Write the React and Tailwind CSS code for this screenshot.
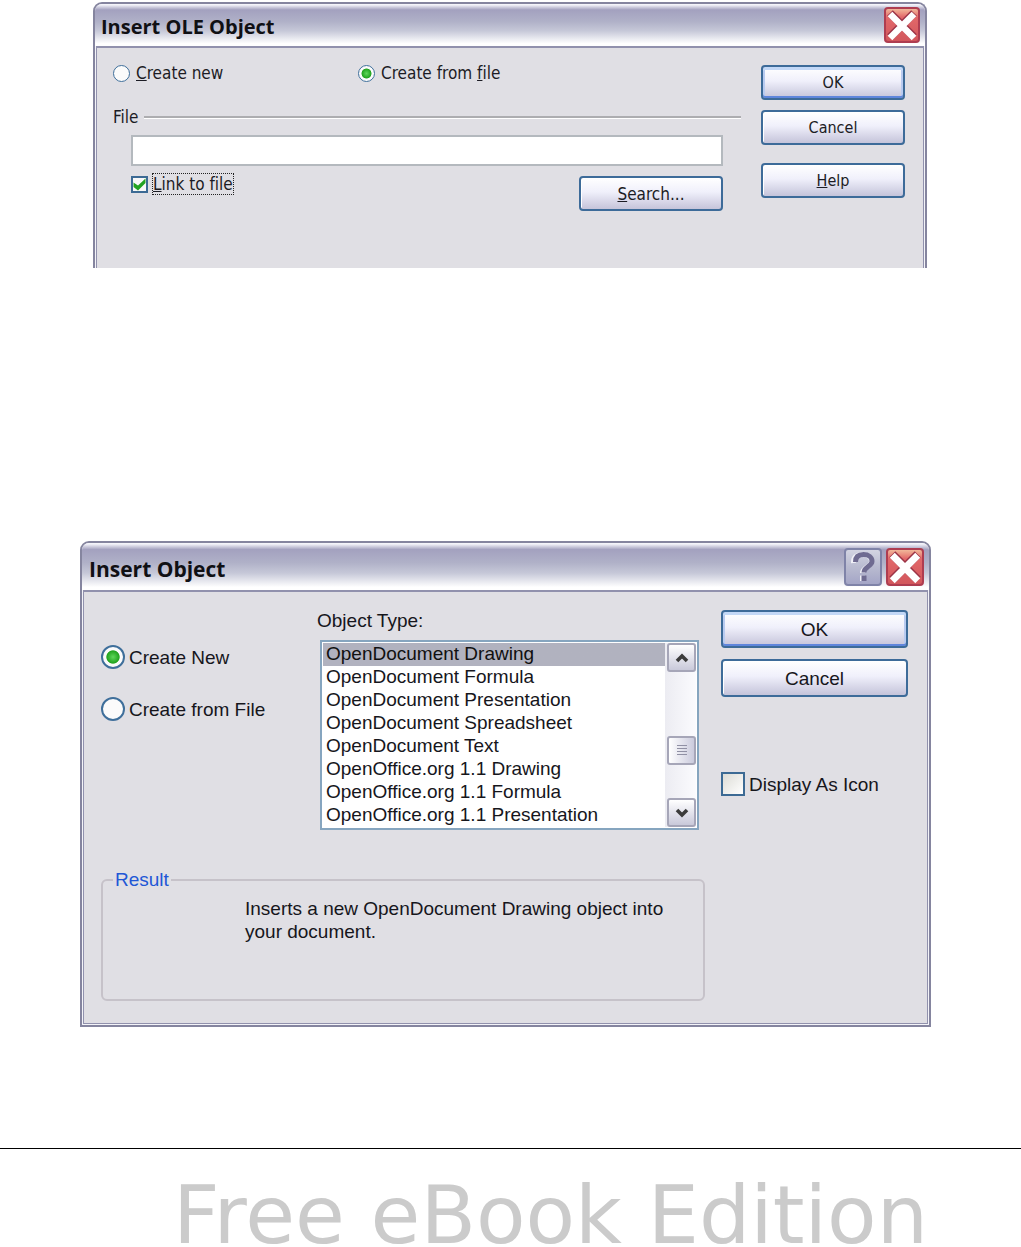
import { useState } from 'react';
import clsx from 'clsx';

const objectTypes = [
    'OpenDocument Drawing',
    'OpenDocument Formula',
    'OpenDocument Presentation',
    'OpenDocument Spreadsheet',
    'OpenDocument Text',
    'OpenOffice.org 1.1 Drawing',
    'OpenOffice.org 1.1 Formula',
    'OpenOffice.org 1.1 Presentation',
];

function CloseButton({ className }) {
    return (
        <button
            aria-label="Close"
            className={clsx('rounded-[4px] border-2 border-[#ae3d50] bg-linear-to-b from-[#f0b79a] via-[#e2686a] via-25% to-[#d2575c]', className)}
        >
            <svg viewBox="0 0 32 32" className="w-full h-full">
                <path d="M4 4L28 28M28 4L4 28" stroke="#9c3346" strokeWidth="8" />
                <path d="M4 5L28 29M28 5L4 29" stroke="#fff" strokeWidth="6.6" />
            </svg>
        </button>
    );
}

function HelpButton({ className }) {
    return (
        <button
            aria-label="Help"
            className={clsx('rounded-[4px] border-2 border-[#7f83a8] bg-linear-to-b from-[#d3d4e2] via-[#b9bbd0] to-[#a4a5c6]', className)}
        >
            <svg viewBox="0 0 34 34" className="w-full h-full" fill="none">
                <g stroke="#f1f1f8" strokeWidth="5">
                    <path d="M7.500 13C7 7 11 4.500 16.500 4.500C22 4.500 25.500 7.500 25.500 11.500C25.500 17 16.500 17 16.500 23" />
                    <path d="M16.500 25.500V31" />
                </g>
                <g stroke="#6f6b91" strokeWidth="5">
                    <path d="M9.500 12C9.500 7 12.500 4.500 17.500 4.500C22.500 4.500 26 7.200 26 11.200C26 16.500 18 16.500 18 22.500" />
                    <path d="M18 25.500V31" />
                </g>
            </svg>
        </button>
    );
}

function Window({ title, buttons, cut, className, titleClass, children }) {
    return (
        <section
            aria-label={title}
            className={clsx('border-t-2 border-x-2 border-[#85859f] rounded-t-[9px] bg-[#f4f4f9] overflow-hidden', !cut && 'border-b-2', className)}
        >
            <header
                className={clsx(
                    'flex items-center justify-between pr-[5px] font-bold leading-6 text-[#101014]',
                    "font-['Open_Sans',sans-serif] bg-[linear-gradient(#f4f4fa_2%,#a3a1bf_14%,#b0b1c8_42%,#c6c8d8_64%,#fff_94%)]",
                    titleClass
                )}
            >
                <h2 className="pt-1">{title}</h2>
                <div className="flex gap-1">{buttons}</div>
            </header>
            <div className={clsx('mx-px border-t-2 border-x border-[#9191ad] bg-[#e0dfe4]', !cut && 'border-b mb-px')}>{children}</div>
        </section>
    );
}

function PushButton({ primary, className, children }) {
    return (
        <button
            className={clsx(
                'w-full rounded-[4px] border-2 border-[#3d6b99] text-center bg-linear-to-b from-white via-[#f0f0fb] via-45% to-[#c5c4da]',
                primary ? 'shadow-[inset_0_3px_0_#c3d8f7,inset_0_-2px_0_#5f86dc,inset_2px_0_0_#b9cbf0,inset_-2px_0_0_#b9cbf0]' : 'shadow-[inset_1px_1px_0_#fff]',
                className
            )}
        >
            {children}
        </button>
    );
}

function Radio({ name, checked, onChange, big, children }) {
    return (
        <label className={clsx('flex items-center', big ? 'gap-1' : 'gap-1.5')}>
            <input
                type="radio"
                name={name}
                checked={checked}
                onChange={onChange}
                className={clsx(
                    'appearance-none shrink-0 rounded-full border-[#3f6f9b] bg-[#fbfbfb]',
                    big ? 'size-6 border-2' : 'size-[17px] border',
                    checked && 'bg-[radial-gradient(circle,#5fd75a_0%,#22a31f_44%,#fbfbfb_50%)]'
                )}
            />
            <span>{children}</span>
        </label>
    );
}

function ScrollButton({ label, path }) {
    return (
        <button
            aria-label={label}
            className="size-[29px] rounded-[3px] border-2 border-[#a6a6b8] bg-linear-to-b from-white to-[#c9c9da] flex items-center justify-center"
        >
            <svg viewBox="0 0 14 10" className="w-3.5 h-2.5" fill="none" stroke="#3c3c3c" strokeWidth="3.600">
                <path d={path} />
            </svg>
        </button>
    );
}

function InsertOleObject() {
    const [source, setSource] = useState('file');
    const [link, setLink] = useState(true);

    return (
        <Window title="Insert OLE Object" cut className="ml-[93px] mr-[94px]" titleClass="h-[42px] pl-1.5 text-[20px]" buttons={<CloseButton className="size-9" />}>
            <div className="flex gap-5 pl-4 pr-[18px] pt-[15px] pb-[57px] font-['DejaVu_Sans_Condensed','DejaVu_Sans',sans-serif] text-[17px] leading-5 text-[#1c1c24] [font-variant-ligatures:none]">
                <div className="flex-1">
                    <div className="grid grid-cols-[245px_1fr]">
                        <Radio name="source" checked={source === 'new'} onChange={() => setSource('new')}>
                            <u>C</u>reate new
                        </Radio>
                        <Radio name="source" checked={source === 'file'} onChange={() => setSource('file')}>
                            Create from <u>f</u>ile
                        </Radio>
                    </div>
                    <div className="flex items-center gap-1.5 mt-6">
                        <label htmlFor="file-path">File</label>
                        <div className="flex-1 h-[3px] border-t-2 border-b border-t-[#adadb0] border-b-white" />
                    </div>
                    <div className="px-[18px] pt-2">
                        <input id="file-path" type="text" className="block w-full h-[31px] px-1 border-2 border-[#b4b9be] bg-white outline-none" />
                        <div className="flex justify-between pt-2">
                            <label className="flex items-center gap-1 h-5">
                                <span className="relative flex">
                                    <input
                                        type="checkbox"
                                        checked={link}
                                        onChange={(e) => setLink(e.target.checked)}
                                        className="appearance-none size-[17px] border-2 border-[#3c6a94] bg-[#f8f8f8]"
                                    />
                                    {link && (
                                        <svg viewBox="0 0 17 17" className="absolute inset-0 pointer-events-none" fill="#22a322">
                                            <path d="M2.500 6.500L7 9.500L14.500 2.500V7L7 14.500L2.500 11Z" />
                                        </svg>
                                    )}
                                </span>
                                <span className="border border-dotted border-[#222]"><u>L</u>ink to file</span>
                            </label>
                            <div className="w-36 pt-0.5">
                                <PushButton className="h-[35px]"><u>S</u>earch...</PushButton>
                            </div>
                        </div>
                    </div>
                </div>
                <div className="w-36 pt-0.5 text-[16px]">
                    <PushButton primary className="h-[35px]">OK</PushButton>
                    <PushButton className="h-[35px] mt-2.5">Cancel</PushButton>
                    <PushButton className="h-[35px] mt-[18px]"><u>H</u>elp</PushButton>
                </div>
            </div>
        </Window>
    );
}

function InsertObject() {
    const [mode, setMode] = useState('new');
    const [type, setType] = useState(objectTypes[0]);

    return (
        <Window
            title="Insert Object"
            className="ml-[80px] mr-[90px]"
            titleClass="h-[47px] pl-[7px] text-[21px]"
            buttons={<><HelpButton className="size-[38px]" /><CloseButton className="size-[38px]" /></>}
        >
            <div className="flex gap-4 pl-[17px] pr-[19px] pt-[17px] pb-[22px] font-['Liberation_Sans',Arial,sans-serif] text-[19px] leading-[23px] text-[#16161c]">
                <div className="flex-1">
                    <div className="flex">
                        <div className="w-[216px] pt-9 flex flex-col gap-7">
                            <Radio big name="mode" checked={mode === 'new'} onChange={() => setMode('new')}>Create New</Radio>
                            <Radio big name="mode" checked={mode === 'file'} onChange={() => setMode('file')}>Create from File</Radio>
                        </div>
                        <div className="flex-1 pr-1.5">
                            <label htmlFor="object-type">Object Type:</label>
                            <div className="flex mt-2 ml-[3px] p-px border-2 border-[#86a5bf] bg-white">
                                <select
                                    id="object-type"
                                    size={8}
                                    value={type}
                                    onChange={(e) => setType(e.target.value)}
                                    className="flex-1 min-w-0 h-[184px] overflow-hidden outline-none bg-white"
                                >
                                    {objectTypes.map((t) => (
                                        <option key={t} value={t} className="h-[23px] min-h-0 p-0 pl-[3px] leading-[23px] checked:bg-linear-to-r checked:from-[#b1b2bf] checked:to-[#b1b2bf]">
                                            {t}
                                        </option>
                                    ))}
                                </select>
                                <div className="flex flex-col bg-linear-to-r from-[#ececf2] to-[#fbfbfe] pl-0.5">
                                    <ScrollButton label="Scroll up" path="M2 8L7 3L12 8" />
                                    <div className="flex-1 flex flex-col justify-center pt-[30px]">
                                        <div className="size-[29px] rounded-[3px] border-2 border-[#a6a6b8] bg-linear-to-r from-white to-[#cbcbdd] flex flex-col items-center justify-center gap-0.5">
                                            <i className="w-2.5 h-px bg-[#9090a4]" />
                                            <i className="w-2.5 h-px bg-[#9090a4]" />
                                            <i className="w-2.5 h-px bg-[#9090a4]" />
                                            <i className="w-2.5 h-px bg-[#9090a4]" />
                                        </div>
                                    </div>
                                    <ScrollButton label="Scroll down" path="M2 2L7 7L12 2" />
                                </div>
                            </div>
                        </div>
                    </div>
                    <fieldset className="mt-[38px] h-[133px] border-2 border-[#c6c2c9] rounded-[6px] pl-[142px] pr-9">
                        <legend className="-ml-[132px] px-0.5 text-[#2257d6]">Result</legend>
                        <p className="pt-1.5">Inserts a new OpenDocument Drawing object into your document.</p>
                    </fieldset>
                </div>
                <div className="w-[187px] pt-px">
                    <PushButton primary className="h-[38px]">OK</PushButton>
                    <PushButton className="h-[38px] mt-[11px]">Cancel</PushButton>
                    <label className="flex items-center gap-1 mt-[75px]">
                        <input type="checkbox" className="appearance-none shrink-0 size-6 border-2 border-[#3c6a94] bg-linear-to-br from-[#dcdcd6] to-white" />
                        <span className="whitespace-nowrap">Display As Icon</span>
                    </label>
                </div>
            </div>
        </Window>
    );
}

export default function App() {
    return (
        <div className="min-h-screen bg-white pt-0.5 flex flex-col">
            <InsertOleObject />
            <div className="h-[273px]" />
            <InsertObject />
            <footer className="mt-auto border-t border-black pt-[34px] pr-[93px] text-right font-['DejaVu_Sans',sans-serif] text-[81px] leading-16 text-[#cbcbcb] whitespace-nowrap">
                Free eBook Edition
            </footer>
        </div>
    );
}
